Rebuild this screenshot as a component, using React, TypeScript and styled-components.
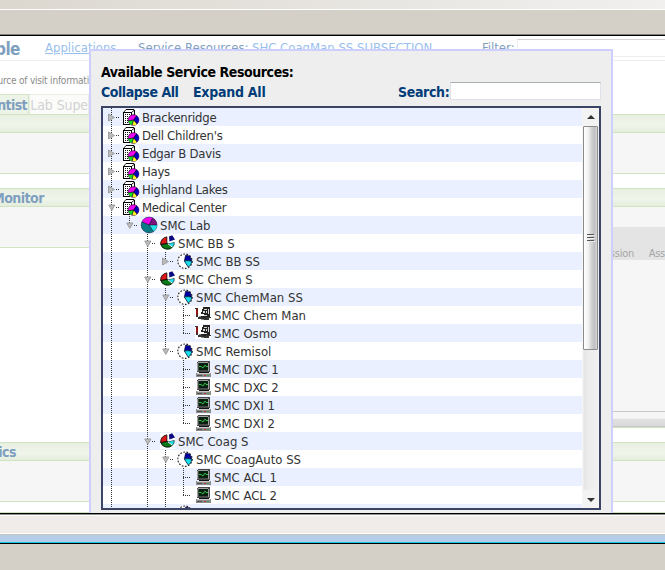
import React from "react";
import styled, { createGlobalStyle, css } from "styled-components";

const GlobalStyle = createGlobalStyle`
  * { box-sizing: border-box; }
  body { margin: 0; overflow: hidden; background: #d4d0c8; }
`;

const Screen = styled.div`
  position: relative;
  width: 665px;
  height: 570px;
  overflow: hidden;
  display: flex;
  flex-direction: column;
  background: #d4d0c8;
  font-family: "DejaVu Sans Condensed", "DejaVu Sans", sans-serif;
  font-stretch: condensed;
  font-size: 13px;
  white-space: nowrap;
`;

const TopStrip = styled.div`
  height: 10px;
  background: linear-gradient(90deg, #dcd8d0, #f1f0ef);
  border-bottom: 1px solid #fff;
`;

const ToolStrip = styled.div`
  height: 26px;
  background: #d4d0c8;
  border-bottom: 1px solid #000;
  box-shadow: inset 0 -1px 0 #808080;
`;

const Page = styled.div`
  height: 477px;
  background: #fff;
  overflow: hidden;
  display: flex;
  flex-direction: column;
`;

const StatusBar = styled.div`
  height: 22px;
  background: #f0ecea;
  border-top: 1px solid #000;
  border-bottom: 1px solid #c9c3bc;
  box-shadow: inset 0 1px 0 #8a908a, inset 0 2px 0 #fff, inset 0 -1px 0 #fff;
`;

const WindowEdge = styled.div`
  height: 9px;
  background: #b5cde9;
  border-bottom: 1px solid #000;
  box-shadow: inset 0 -1px 0 #18c4e4;
`;

const PageHeader = styled.div`
  display: flex;
  height: 25px;
  flex: none;
  padding-top: 3px;
  border-bottom: 1px solid #eee;
  line-height: 20px;
  color: #7fa0c0;
`;

const ClippedText = styled.div<{ $width: number; $size: number; $spacing?: number }>`
  display: flex;
  justify-content: flex-end;
  flex: none;
  width: ${(p) => p.$width}px;
  font-size: ${(p) => p.$size}px;
  letter-spacing: ${(p) => p.$spacing ?? 0}px;
  font-weight: bold;
  color: #7f9fbf;
`;

const HeaderText = styled.span<{ $width: number; $gap: number; $link?: boolean }>`
  flex: none;
  width: ${(p) => p.$width}px;
  margin-left: ${(p) => p.$gap}px;
  line-height: 18px;
  ${(p) =>
    p.$link &&
    css`
      color: #99bfee;
      text-decoration: underline;
    `}
`;

const FilterInput = styled.div`
  flex: 1;
  height: 18px;
  margin-left: 2px;
  border: 1px solid #eee;
  border-top-color: #d4d4d4;
  border-right: 0;
`;

const Note = styled.div`
  height: 33px;
  flex: none;
  padding-top: 13px;
  font-size: 10px;
  line-height: 14px;
  color: #8b8b8b;
`;

const NoteText = styled.div`
  display: flex;
  justify-content: flex-end;
  width: 89px;
  letter-spacing: -0.2px;
`;

const Tabs = styled.div`
  display: flex;
  height: 20px;
  flex: none;
`;

const Tab = styled.div<{ $width: number; $active?: boolean }>`
  display: flex;
  justify-content: flex-end;
  width: ${(p) => p.$width}px;
  padding-right: ${(p) => (p.$active ? 1 : 0)}px;
  overflow: hidden;
  border: 1px solid ${(p) => (p.$active ? "#d5e5c8" : "#e8eee4")};
  border-width: ${(p) => (p.$active ? "1px 1px 0 0" : "1px 1px 0 1px")};
  background: ${(p) => (p.$active ? "#edf3e7" : "#fbfcfa")};
  color: ${(p) => (p.$active ? "#7f9fbf" : "#d2d2d2")};
  font-weight: ${(p) => (p.$active ? "bold" : "normal")};
  font-size: 14px;
  letter-spacing: ${(p) => (p.$active ? -0.6 : -0.1)}px;
  line-height: 21px;
`;

const SectionBar = styled.div`
  height: 19px;
  flex: none;
  border: solid #d2e3c3;
  border-width: 1px 0;
  background: linear-gradient(#e8f0e1, #f0f5eb 60%, #e4eedc);
  line-height: 18px;
`;

const SectionBody = styled.div<{ $width?: string }>`
  width: ${(p) => p.$width ?? "100%"};
  height: 41px;
  flex: none;
  background: #f6f6f6;
  border-bottom: 1px solid #d2e3c3;
`;

const Gap = styled.div<{ $height: number }>`
  height: ${(p) => p.$height}px;
  flex: none;
`;

const Split = styled.div`
  display: flex;
  align-items: flex-start;
  justify-content: space-between;
  height: 235px;
  flex: none;
`;

const ResultsPanel = styled.div`
  width: 60px;
  padding-top: 20px;
  background: #f6f6f6;
`;

const ResultsHeader = styled.div`
  display: flex;
  align-items: flex-end;
  justify-content: space-between;
  height: 33px;
  background: #e4e4e4;
  color: #a6a6a6;
  font-size: 11px;
  line-height: 12px;
  letter-spacing: -0.25px;
`;

const ClippedHeading = styled.span`
  display: flex;
  justify-content: flex-end;
  width: 29px;
`;

const ResultsFooter = styled.div`
  height: 16px;
  margin-top: 151px;
  border: solid #c8c8c8;
  border-width: 1px 0;
  background: linear-gradient(#f6f6f6 45%, #e2e2e2 50%, #d8d8d8);
`;

const PanelEdge = styled.div`
  height: 1px;
  flex: none;
  background: #d2e3c3;
`;

const Dialog = styled.div`
  position: absolute;
  left: 89px;
  top: 49px;
  width: 524px;
  height: 464px;
  padding: 12px 10px 0;
  border: 2px solid #ceceff;
  border-bottom: 0;
  background: #eee;
`;

const DialogTitle = styled.div`
  height: 19px;
  font-weight: bold;
  font-size: 14px;
  line-height: 18px;
  letter-spacing: -0.42px;
  color: #000;
`;

const DialogTools = styled.div`
  display: flex;
  height: 24px;
  color: #003c78;
  font-weight: bold;
  font-size: 14px;
  line-height: 20px;
`;

const Action = styled.span<{ $width: number; $spacing: number }>`
  width: ${(p) => p.$width}px;
  flex: none;
  letter-spacing: ${(p) => p.$spacing}px;
`;

const SearchInput = styled.input`
  width: 151px;
  height: 18px;
  padding: 0 3px;
  border: 1px solid #dde1ea;
  border-top-color: #a8afb2;
  background: #fff;
`;

const TreeFrame = styled.div`
  display: flex;
  width: 500px;
  height: 404px;
  border: 2px solid #3b4466;
  background: #fff;
`;

const TreeRows = styled.div`
  width: 479px;
  height: 400px;
  overflow: hidden;
`;

const Row = styled.div<{ $striped: boolean }>`
  display: flex;
  height: 18px;
  background: ${(p) => (p.$striped ? "#eaf0ff" : "#fff")};
`;

const Cell = styled.svg`
  flex: none;
  width: 18px;
  height: 18px;
`;

const Glyph = styled.svg`
  flex: none;
  width: 18px;
  height: 18px;
  margin-left: 1px;
`;

const Label = styled.span<{ $tight: boolean }>`
  padding-left: 2px;
  color: #333;
  line-height: 19px;
  letter-spacing: ${(p) => (p.$tight ? -0.26 : 0)}px;
`;

const Scrollbar = styled.div`
  display: flex;
  flex-direction: column;
  width: 17px;
  height: 400px;
  padding-left: 1px;
  background: linear-gradient(90deg, #fafafa, #e6e6e6 12%, #ededed 40%, #f1f1f1);
`;

const ScrollButton = styled.svg`
  flex: none;
  width: 16px;
  height: 18px;
  background: #f3f3f3;
`;

const Thumb = styled.div`
  display: flex;
  align-items: center;
  justify-content: center;
  width: 15px;
  height: 224px;
  border: 1px solid #8c8c8c;
  border-radius: 1px;
  background: linear-gradient(90deg, #fff, #f0f0f0 35%, #dcdcdc 48%, #bfbfc2 80%, #d8d8d8);
`;

const Track = styled.div`
  flex: 1;
`;

type Kind = "site" | "lab" | "section" | "subsection" | "manual" | "bench";
type Guide = "none" | "line" | "open" | "closed" | "openLast" | "closedLast" | "tee" | "end";

interface Node {
  guides: Guide[];
  kind: Kind;
  label: string;
}

const rows: Node[] = [
  { guides: ["closed"], kind: "site", label: "Brackenridge" },
  { guides: ["closed"], kind: "site", label: "Dell Children's" },
  { guides: ["closed"], kind: "site", label: "Edgar B Davis" },
  { guides: ["closed"], kind: "site", label: "Hays" },
  { guides: ["closed"], kind: "site", label: "Highland Lakes" },
  { guides: ["open"], kind: "site", label: "Medical Center" },
  { guides: ["line", "openLast"], kind: "lab", label: "SMC Lab" },
  { guides: ["line", "none", "open"], kind: "section", label: "SMC BB S" },
  { guides: ["line", "none", "line", "closedLast"], kind: "subsection", label: "SMC BB SS" },
  { guides: ["line", "none", "open"], kind: "section", label: "SMC Chem S" },
  { guides: ["line", "none", "line", "open"], kind: "subsection", label: "SMC ChemMan SS" },
  { guides: ["line", "none", "line", "line", "tee"], kind: "manual", label: "SMC Chem Man" },
  { guides: ["line", "none", "line", "line", "end"], kind: "manual", label: "SMC Osmo" },
  { guides: ["line", "none", "line", "openLast"], kind: "subsection", label: "SMC Remisol" },
  { guides: ["line", "none", "line", "none", "tee"], kind: "bench", label: "SMC DXC 1" },
  { guides: ["line", "none", "line", "none", "tee"], kind: "bench", label: "SMC DXC 2" },
  { guides: ["line", "none", "line", "none", "tee"], kind: "bench", label: "SMC DXI 1" },
  { guides: ["line", "none", "line", "none", "end"], kind: "bench", label: "SMC DXI 2" },
  { guides: ["line", "none", "open"], kind: "section", label: "SMC Coag S" },
  { guides: ["line", "none", "line", "open"], kind: "subsection", label: "SMC CoagAuto SS" },
  { guides: ["line", "none", "line", "line", "tee"], kind: "bench", label: "SMC ACL 1" },
  { guides: ["line", "none", "line", "line", "end"], kind: "bench", label: "SMC ACL 2" },
  { guides: ["line", "none", "line", "line"], kind: "subsection", label: "" },
];

function GuideCell({ type }: { type: Guide }) {
  const dotted = { stroke: "#333", strokeWidth: 1, strokeDasharray: "1 1" };
  const short = type === "end" || type === "openLast" || type === "closedLast";
  const open = type === "open" || type === "openLast";
  const closed = type === "closed" || type === "closedLast";
  const leaf = type === "tee" || type === "end";
  return (
    <Cell viewBox="0 0 18 18" shapeRendering="crispEdges">
      {type !== "none" && <path d={short ? "M8.5 0V10" : "M8.5 0V18"} {...dotted} />}
      {leaf && <path d="M8 9.5H15" {...dotted} />}
      {(open || closed) && <path d="M13 9.5H16" {...dotted} />}
      {closed && <path d="M5.5 6L11.5 9.5L5.5 13Z" fill="#bcbcbc" stroke="#999" strokeWidth=".9" shapeRendering="auto" />}
      {open && <path d="M5.7 7H12L8.8 12.4Z" fill="#bcbcbc" stroke="#999" strokeWidth=".9" shapeRendering="auto" />}
    </Cell>
  );
}

function SiteIcon() {
  return (
    <>
      <path fill="#fff" d="M1 1H17V18H1Z" />
      <g shapeRendering="crispEdges">
        <path fill="none" stroke="#000" d="M1.5 17V4.5H9.5V8M1 16.5H8M4 1.5H12M12.5 2V7" />
        <path stroke="#000" strokeWidth=".9" d="M1.5 4.5L4 1.5M9.5 4.5L12.5 2" shapeRendering="auto" />
        <path stroke="#111" strokeDasharray="1 1" d="M3 6.5H8M3 8.5H7M3 10.5H6M3 12.5H6M3 14.5H6" />
      </g>
      <circle cx="11.5" cy="12" r="5.4" fill="#f000f0" stroke="#101010" strokeWidth=".6" />
      <path fill="#0000b8" d="M11.5 12L14.6 7.7A5.3 5.3 0 0 1 15 16Z" />
      <path fill="#ffff20" d="M11.5 12L15 16A5.3 5.3 0 0 1 10.2 17.1Z" />
      <path fill="#10dc20" d="M11.5 12L10.2 17.1A5.3 5.3 0 0 1 6.2 12.8Z" />
      <path fill="none" stroke="#000" strokeWidth=".6" d="M6.2 12.8L11.5 12L14.6 7.7M11.5 12L15 16M11.5 12L10.2 17.1" />
    </>
  );
}

function LabIcon() {
  return (
    <>
      <circle cx="9.1" cy="9" r="7.9" fill="#087b84" stroke="#124" strokeWidth=".6" />
      <path fill="#f000e8" d="M9.1 9L2 5.8A7.8 7.8 0 0 1 12.6 2Z" />
      <path fill="#80107c" d="M9.1 9L12.6 2A7.8 7.8 0 0 1 16.9 9Z" />
      <path fill="#20e4e8" d="M9.1 9H16.9A7.8 7.8 0 0 1 13.4 15.5Z" />
      <path fill="none" stroke="#113" strokeWidth=".6" d="M2 5.8L9.1 9L12.6 2M16.9 9H9.1L13.4 15.5" />
    </>
  );
}

function SectionIcon() {
  return (
    <>
      <path fill="#fff" d="M2 1H17V17H2Z" />
      <path fill="#0a7a18" stroke="#000" strokeWidth=".8" d="M9 9.4L14.8 13A7 6.6 0 0 1 2.7 10.2Z" />
      <path fill="#dc1818" stroke="#000" strokeWidth=".8" d="M9 9.4L2.7 10.4A6.8 6.8 0 0 1 9 2.9Z" />
      <path fill="#20e0e8" stroke="#022" strokeWidth=".7" d="M9.8 9.4L16.2 8.4Q16.8 11 14.4 13.4Z" />
      <path stroke="#fff" strokeWidth="1" d="M10.2 2V8.8L16.6 7.4M10 9.9L14.6 13.4" fill="none" />
      <path fill="#0a0a80" d="M11.4 7.4L11 2.6L14.2 1.2L17 5.4Z" />
    </>
  );
}

function SubsectionIcon() {
  return (
    <>
      <circle cx="9" cy="9.2" r="8" fill="#fff" />
      <circle cx="9" cy="9.2" r="7.2" fill="none" stroke="#222" strokeWidth="1.1" strokeDasharray="1.7 1.5" />
      <path fill="#0000a0" stroke="#001" strokeWidth=".5" d="M8.3 8.8L9.6 3L14 4L16 9.2L12.2 8.8Z" />
      <path fill="#18dfe9" stroke="#002040" strokeWidth=".8" d="M8.3 9L12 8.6L15.9 9.3L14.8 12.8L12.2 15Z" />
    </>
  );
}

function ManualIcon() {
  return (
    <g shapeRendering="crispEdges" transform="translate(1 -1)">
      <path fill="#fff" d="M0 2H16V16H0Z" />
      <path fill="#222" d="M8 2H15V12H12V14H8V13H6V11H9V9H6V7H7V4H8Z" />
      <path fill="#d8d8d8" d="M9 4H12V5H9ZM8 6H10V8H8ZM11 6H12V8H11ZM13 4H14V9H13ZM9 10H12V11H9Z" />
      <path fill="#8a1515" d="M1 4H3V10H1Z" />
      <path fill="#333" d="M0 3H3V4H0ZM1 10H3V12H1ZM3 12H8V14H3ZM9 13H14V15H9ZM11 12H16V13H11Z" />
      <path fill="#888" d="M4 11H6V12H4ZM6 14H9V15H6Z" />
    </g>
  );
}

function BenchIcon() {
  return (
    <g shapeRendering="crispEdges" transform="translate(2 1)">
      <path fill="#484848" d="M2 0H14V11H1V1H2Z" />
      <path fill="#a0a0a0" d="M2 1H12V2H2ZM1 2H2V10H1ZM12 2H13V10H12Z" />
      <path fill="#052010" d="M3 2H12V9H3Z" />
      <path fill="none" stroke="#38b848" d="M3 5.5H5L7 7L9 4L10 5.5H12" shapeRendering="auto" />
      <path fill="#111" d="M3 11H13V12H3Z" />
      <path fill="#8c8c8c" d="M0 12H15V16H0Z" />
      <path fill="#c8c8c8" d="M1 12H14V13H1Z" />
      <path fill="#b83838" d="M8 14H10V15H8Z" />
      <path fill="#38a048" d="M11 14H13V15H11Z" />
      <path fill="#505050" d="M1 14H6V15H1Z" />
    </g>
  );
}

const icons: Record<Kind, () => React.ReactElement> = {
  site: SiteIcon,
  lab: LabIcon,
  section: SectionIcon,
  subsection: SubsectionIcon,
  manual: ManualIcon,
  bench: BenchIcon,
};

function TreeRow({ node, index }: { node: Node; index: number }) {
  const Icon = icons[node.kind];
  return (
    <Row $striped={index % 2 === 0}>
      {node.guides.map((g, i) => (
        <GuideCell key={i} type={g} />
      ))}
      <Glyph viewBox="0 0 18 18">
        <Icon />
      </Glyph>
      <Label $tight={node.kind === "site"}>{node.label}</Label>
    </Row>
  );
}

export default function App() {
  return (
    <Screen>
      <GlobalStyle />
      <TopStrip />
      <ToolStrip />
      <Page>
        <PageHeader>
          <ClippedText $width={20} $size={17} $spacing={-0.5}>Table</ClippedText>
          <HeaderText $width={69} $gap={25} $link>Applications</HeaderText>
          <HeaderText $width={110} $gap={24}>Service Resources:</HeaderText>
          <HeaderText $width={181} $gap={4} $link>SHC CoagMan SS SUBSECTION</HeaderText>
          <HeaderText $width={33} $gap={49}>Filter:</HeaderText>
          <FilterInput />
        </PageHeader>
        <Note>
          <NoteText>Source of visit informati</NoteText>
        </Note>
        <Tabs>
          <Tab $width={29} $active>Scientist</Tab>
          <Tab $width={60}>Lab Supe</Tab>
        </Tabs>
        <SectionBar />
        <SectionBody />
        <Gap $height={14} />
        <SectionBar>
          <ClippedText $width={44} $size={14} $spacing={-0.5}>Monitor</ClippedText>
        </SectionBar>
        <Split>
          <SectionBody $width="100px" />
          <ResultsPanel>
            <ResultsHeader>
              <ClippedHeading>Accession</ClippedHeading>
              <span>Ass</span>
            </ResultsHeader>
            <ResultsFooter />
            <PanelEdge />
          </ResultsPanel>
        </Split>
        <SectionBar>
          <ClippedText $width={16} $size={14} $spacing={-0.5}>Statistics</ClippedText>
        </SectionBar>
        <SectionBody />
        <Gap $height={10} />
        <PanelEdge />
      </Page>
      <StatusBar />
      <WindowEdge />
      <Dialog>
        <DialogTitle>Available Service Resources:</DialogTitle>
        <DialogTools>
          <Action $width={92} $spacing={-0.45}>Collapse All</Action>
          <Action $width={205} $spacing={-0.25}>Expand All</Action>
          <Action $width={52} $spacing={-0.35}>Search:</Action>
          <SearchInput aria-label="Search" />
        </DialogTools>
        <TreeFrame>
          <TreeRows>
            {rows.map((node, i) => (
              <TreeRow key={i} node={node} index={i} />
            ))}
          </TreeRows>
          <Scrollbar>
            <ScrollButton viewBox="0 0 16 18">
              <path d="M8 7L12 11H4Z" fill="#333" />
            </ScrollButton>
            <Thumb>
              <svg width="8" height="9" shapeRendering="crispEdges">
                <path d="M0 .5H7M0 3.5H7M0 6.5H7" stroke="#555" />
                <path d="M1 1.5H8M1 4.5H8M1 7.5H8" stroke="#eee" />
              </svg>
            </Thumb>
            <Track />
            <ScrollButton viewBox="0 0 16 18">
              <path d="M4 8H12L8 12Z" fill="#333" />
            </ScrollButton>
          </Scrollbar>
        </TreeFrame>
      </Dialog>
    </Screen>
  );
}
